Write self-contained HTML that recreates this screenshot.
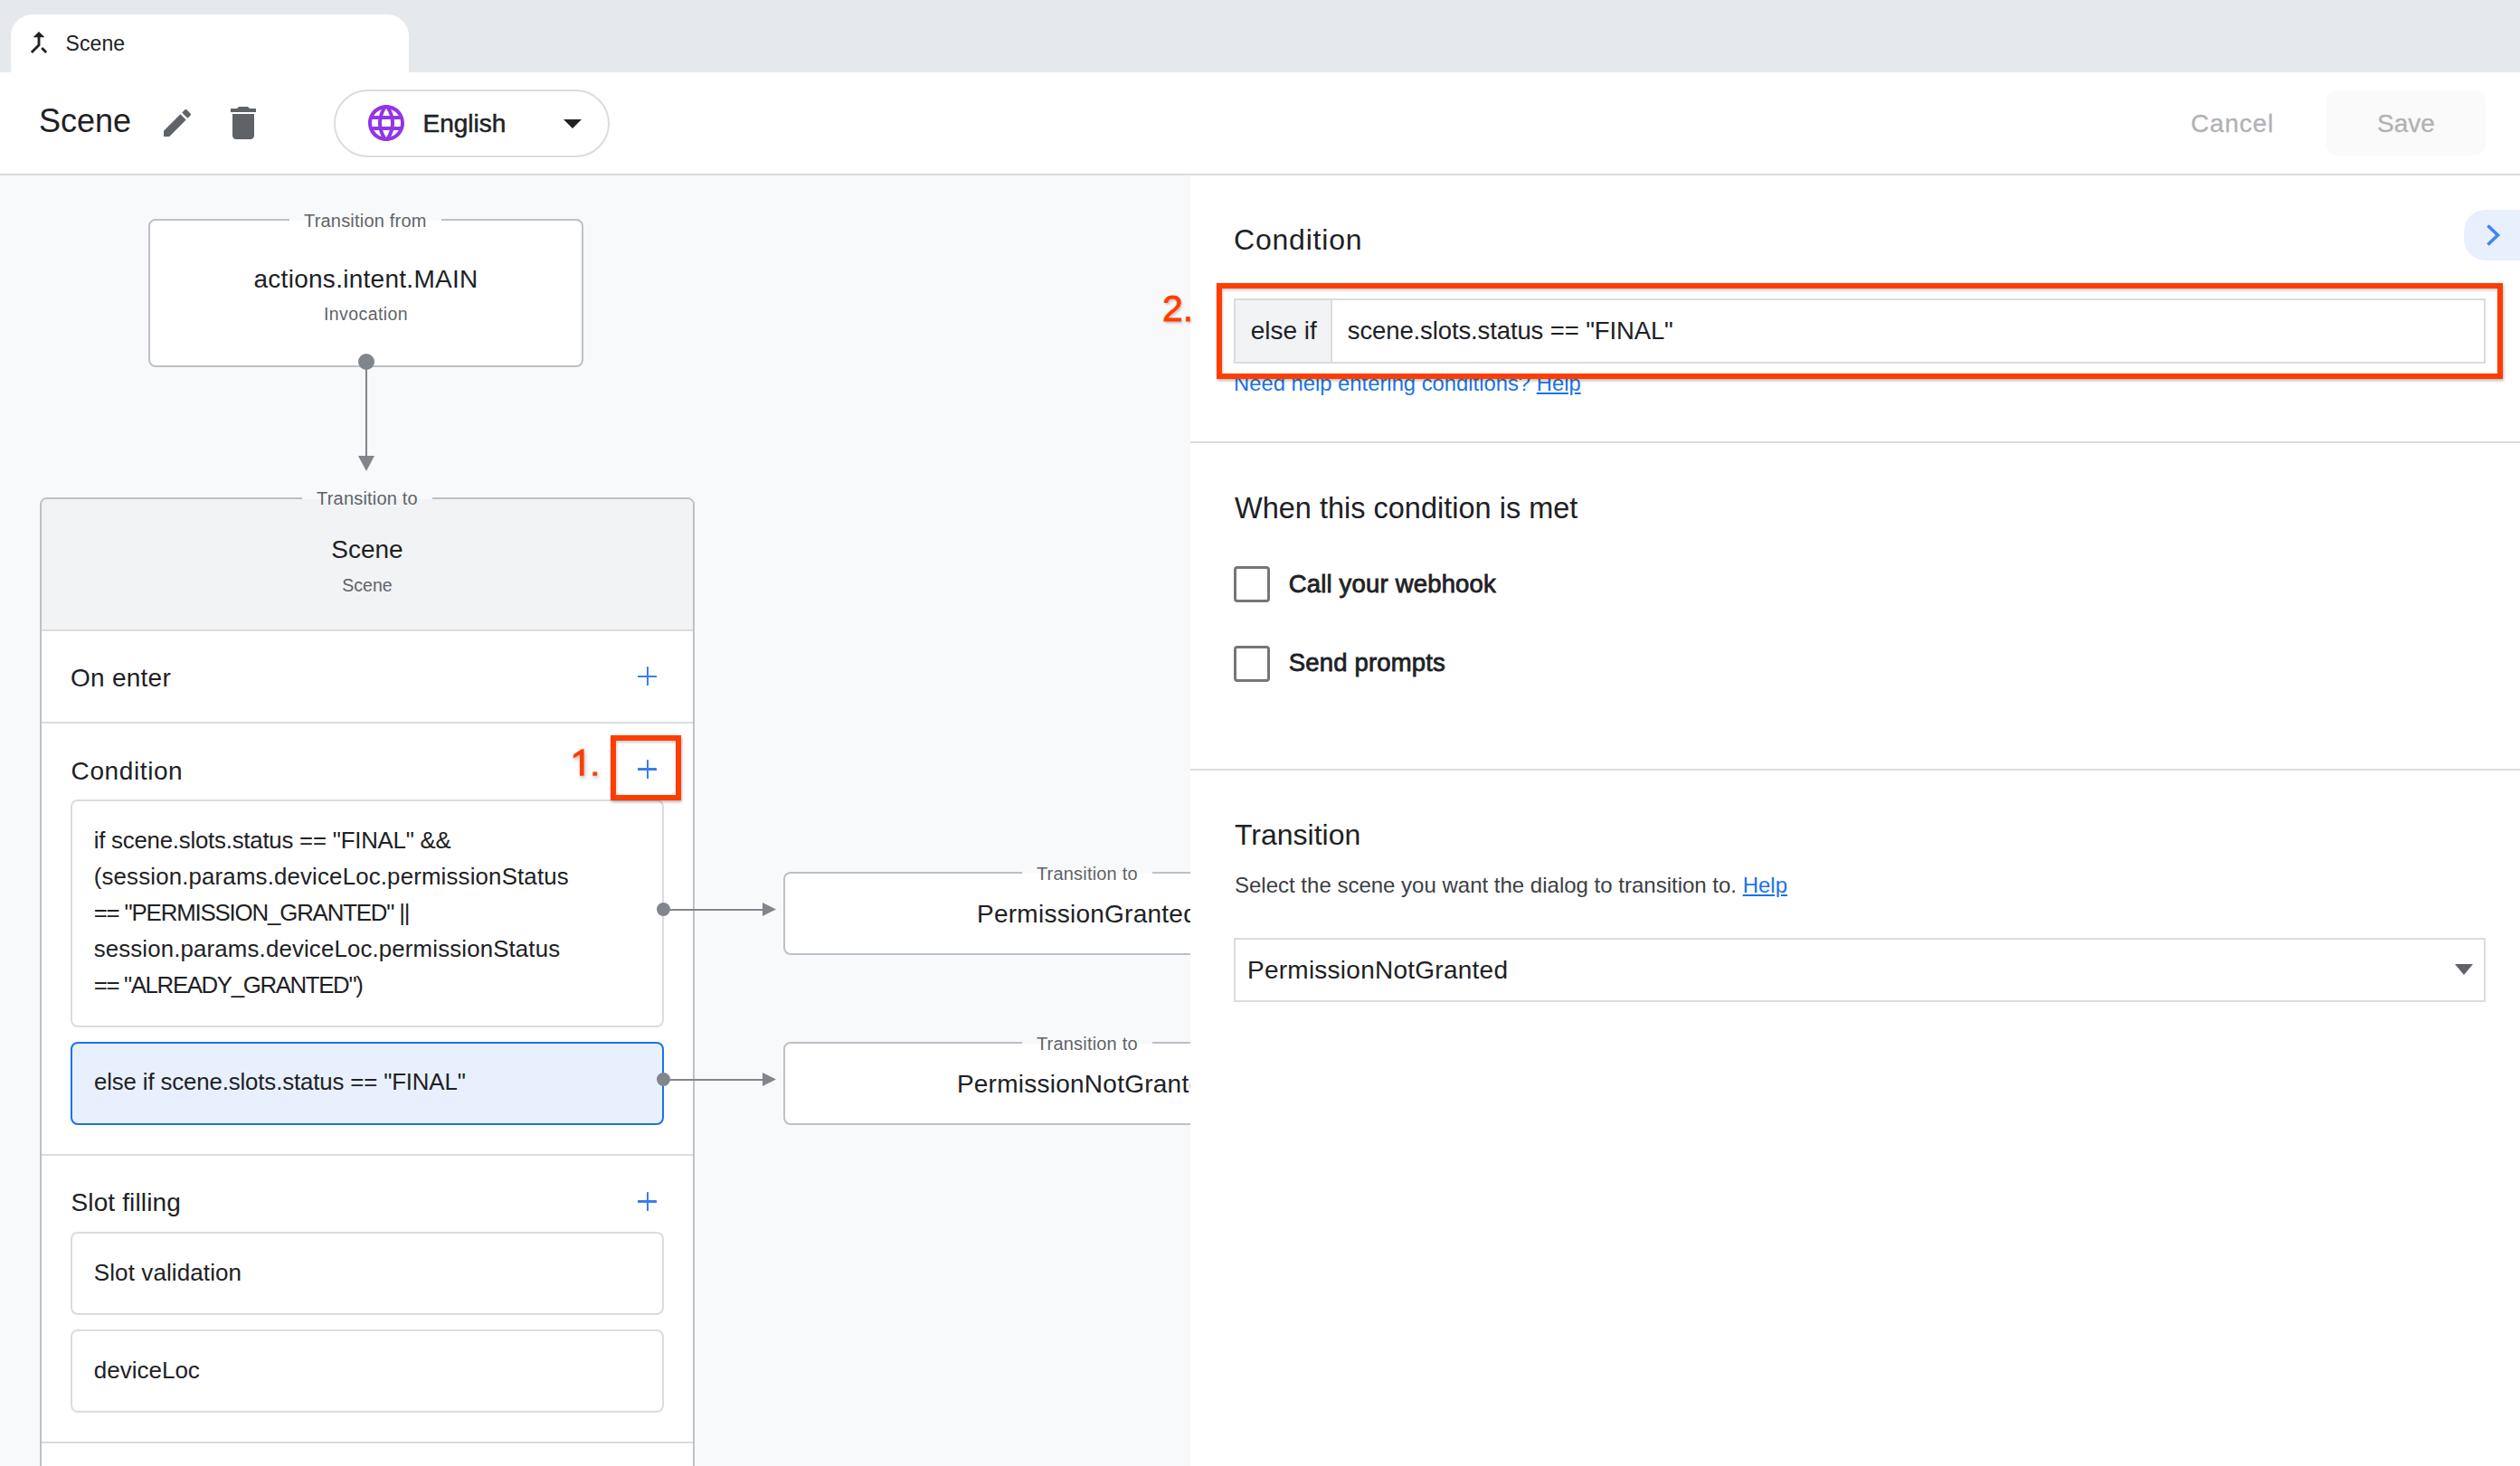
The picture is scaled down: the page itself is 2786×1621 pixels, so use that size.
<!DOCTYPE html>
<html><head><meta charset="utf-8">
<style>
*{box-sizing:border-box;margin:0;padding:0}
html,body{width:2786px;height:1621px;overflow:hidden}
body{position:relative;background:#f8f9fa;font-family:"Liberation Sans",sans-serif;color:#202124}
.a{position:absolute}
.t{position:absolute;white-space:pre;line-height:1}
.box{position:absolute;border:2px solid #bdc1c6;border-radius:8px;background:#fff}
.lbl{position:absolute;white-space:pre;font-size:20px;letter-spacing:0.2px;line-height:30px;color:#5f6368;text-align:center}
.dot{position:absolute;border-radius:50%;background:#80868b}
.hl{position:absolute;background:#80868b}
.card{position:absolute;border:2px solid #dadce0;border-radius:8px;background:#fff}
.div{position:absolute;background:#dadce0}
.plus{position:absolute;width:22px;height:22px}
.plus:before,.plus:after{content:"";position:absolute;background:#3a7ded;border-radius:0.6px}
.plus:before{left:0.4px;top:9.6px;width:21px;height:2.8px}
.plus:after{left:9.6px;top:0.4px;width:2.8px;height:21px}
.red{position:absolute;border:6px solid #ff3d00;box-shadow:1px 2px 3px rgba(0,0,0,.28),inset 1px 2px 3px rgba(0,0,0,.2)}
</style></head><body>

<!-- tab bar -->
<div class="a" style="left:0;top:0;width:2786px;height:80px;background:#e6e9ec"></div>
<div class="a" style="left:12px;top:16px;width:440px;height:64px;background:#fff;border-radius:24px 24px 0 0"></div>

<!-- header -->
<div class="a" style="left:0;top:80px;width:2786px;height:112px;background:#fff"></div>
<div class="a" style="left:0;top:192px;width:2786px;height:2px;background:#dadce0"></div>
<svg class="a" style="left:25.9px;top:30px" width="34" height="34" viewBox="0 0 24 24"><path fill="#202124" d="M17 20.41L18.41 19 15 15.59 13.59 17 17 20.41zM7.5 8H11v5.59L5.59 19 7 20.41l6-6V8h3.5L12 3.5 7.5 8z"/></svg>
<div class="t" style="left:72.5px;top:37px;font-size:23px;letter-spacing:0.1px">Scene</div>

<div class="t" style="left:43px;top:116px;font-size:36px">Scene</div>
<svg class="a" style="left:176.3px;top:116px" width="40" height="40" viewBox="0 0 24 24"><path fill="#5f6368" d="M3 17.25V21h3.75L17.81 9.94l-3.75-3.75L3 17.25zM20.71 7.04c.39-.39.39-1.02 0-1.41l-2.34-2.34c-.39-.39-1.02-.39-1.41 0l-1.830 1.83 3.75 3.75 1.83-1.83z"/></svg>
<svg class="a" style="left:244.6px;top:112px" width="48" height="48" viewBox="0 0 24 24"><path fill="#5f6368" d="M6 19c0 1.1.9 2 2 2h8c1.1 0 2-.9 2-2V7H6v12zM19 4h-3.5l-1-1h-5l-1 1H5v2h14V4z"/></svg>
<div class="a" style="left:369px;top:99px;width:305px;height:75px;border:2px solid #dadce0;border-radius:38px"></div>
<svg class="a" style="left:402.5px;top:112px" width="48" height="48" viewBox="0 0 24 24"><path fill="#9334e6" d="M11.99 2C6.47 2 2 6.48 2 12s4.47 10 9.99 10C17.52 22 22 17.52 22 12S17.52 2 11.99 2zm6.93 6h-2.95c-.32-1.25-.78-2.45-1.38-3.56 1.84.63 3.37 1.91 4.33 3.56zM12 4.04c.83 1.2 1.48 2.53 1.91 3.96h-3.82c.43-1.43 1.08-2.76 1.91-3.96zM4.26 14C4.1 13.36 4 12.69 4 12s.1-1.36.26-2h3.38c-.08.66-.14 1.32-.14 2 0 .68.06 1.34.14 2H4.26zm.82 2h2.95c.32 1.25.78 2.45 1.38 3.56-1.84-.63-3.37-1.9-4.33-3.56zm2.95-8H5.08c.96-1.66 2.49-2.93 4.33-3.56C8.81 5.55 8.35 6.75 8.03 8zM12 19.96c-.83-1.2-1.48-2.53-1.91-3.960h3.82c-.43 1.43-1.08 2.76-1.91 3.96zM14.34 14H9.66c-.09-.66-.16-1.32-.16-2 0-.68.07-1.35.16-2h4.68c.09.65.16 1.320.16 2 0 .68-.07 1.34-.16 2zm.25 5.56c.6-1.11 1.06-2.31 1.38-3.56h2.95c-.96 1.65-2.49 2.93-4.33 3.56zM16.36 14c.08-.66.14-1.32.14-2 0-.68-.06-1.34-.14-2h3.38c.16.64.26 1.31.26 2s-.1 1.36-.26 2h-3.38z"/></svg>
<div class="t" style="left:467.5px;top:123px;font-size:28px;-webkit-text-stroke:0.5px #202124">English</div>
<svg class="a" style="left:623px;top:132px" width="20" height="10" viewBox="0 0 20 10"><path fill="#202124" d="M0 0H20L10 10z"/></svg>
<div class="t" style="left:2422px;top:123px;font-size:28px;letter-spacing:0.8px;color:#b0b2b5;-webkit-text-stroke:0.3px #b0b2b5">Cancel</div>
<div class="a" style="left:2572px;top:100px;width:176px;height:72px;background:#fafafa;border-radius:12px"></div>
<div class="t" style="left:2628px;top:123px;font-size:28px;color:#b0b2b5;-webkit-text-stroke:0.3px #b0b2b5">Save</div>


<!-- canvas: transition from -->
<div class="box" style="left:164px;top:242px;width:481px;height:164px"></div>
<div class="lbl" style="left:319.6px;top:229px;width:168.4px;background:linear-gradient(#f8f9fa 14.6px,#fff 14.6px)">Transition from</div>
<div class="t" style="left:165px;width:479px;text-align:center;top:294.8px;font-size:28px;letter-spacing:0.28px">actions.intent.MAIN</div>
<div class="t" style="left:165px;width:479px;text-align:center;top:337.5px;font-size:19.5px;letter-spacing:0.4px;color:#5f6368">Invocation</div>
<div class="dot" style="left:396px;top:391px;width:18px;height:18px"></div>
<div class="hl" style="left:404px;top:400px;width:2px;height:106px"></div>
<svg class="a" style="left:396px;top:504px" width="18" height="17" viewBox="0 0 18 17"><path fill="#80868b" d="M0 0H18L9 17z"/></svg>

<!-- scene box -->
<div class="a" style="left:44px;top:550px;width:724px;height:1100px;border:2px solid #bdc1c6;border-radius:8px;background:#fff;overflow:hidden">
  <div class="a" style="left:0;top:0;width:720px;height:144px;background:#f1f3f4"></div>
  <div class="a" style="left:0;top:144px;width:720px;height:2px;background:#dadce0"></div>
</div>
<div class="lbl" style="left:334px;top:536px;width:144px;background:linear-gradient(#f8f9fa 16px,#f1f3f4 16px)">Transition to</div>
<div class="t" style="left:45px;width:722px;text-align:center;top:594px;font-size:28px">Scene</div>
<div class="t" style="left:45px;width:722px;text-align:center;top:638px;font-size:19.5px;color:#5f6368">Scene</div>

<div class="t" style="left:78px;top:736px;font-size:28px;letter-spacing:0.25px">On enter</div>
<div class="plus" style="left:705px;top:737px"></div>
<div class="div" style="left:46px;top:798px;width:720px;height:2px"></div>

<div class="t" style="left:78.6px;top:839px;font-size:28px;letter-spacing:0.6px">Condition</div>
<div class="plus" style="left:705px;top:839.5px"></div>
<div class="card" style="left:78px;top:884px;width:656px;height:252px"></div>
<div class="a" style="left:103.7px;top:910px;font-size:25.8px;line-height:39.9px;white-space:pre"><span id="l1" style="letter-spacing:-0.22px">if scene.slots.status == "FINAL" &amp;&amp;</span>
<span id="l2" style="letter-spacing:0.18px">(session.params.deviceLoc.permissionStatus</span>
<span id="l3" style="letter-spacing:-1.15px">== "PERMISSION_GRANTED" ||</span>
<span id="l4" style="letter-spacing:0.16px">session.params.deviceLoc.permissionStatus</span>
<span id="l5" style="letter-spacing:-1.35px">== "ALREADY_GRANTED")</span></div>
<div class="card" style="left:78px;top:1152px;width:656px;height:92px;border-color:#1a73e8;background:#e8f0fe"></div>
<div class="t" style="left:104px;top:1184px;font-size:25.8px;letter-spacing:-0.13px">else if scene.slots.status == "FINAL"</div>
<div class="div" style="left:46px;top:1276px;width:720px;height:2px"></div>

<div class="t" style="left:78.5px;top:1316px;font-size:28px;letter-spacing:0.13px">Slot filling</div>
<div class="plus" style="left:705px;top:1317.5px"></div>
<div class="card" style="left:78px;top:1362px;width:656px;height:92px"></div>
<div class="t" style="left:103.8px;top:1394px;font-size:26px;letter-spacing:0.1px">Slot validation</div>
<div class="card" style="left:78px;top:1470px;width:656px;height:92px"></div>
<div class="t" style="left:103.8px;top:1502px;font-size:26px">deviceLoc</div>
<div class="div" style="left:46px;top:1594px;width:720px;height:2px"></div>

<!-- connectors -->
<div class="dot" style="left:726px;top:998px;width:15px;height:15px"></div>
<div class="hl" style="left:733px;top:1004.5px;width:112px;height:2px"></div>
<svg class="a" style="left:843px;top:998px" width="15" height="15" viewBox="0 0 15 15"><path fill="#80868b" d="M0 0L15 7.5L0 15z"/></svg>
<div class="dot" style="left:726px;top:1186px;width:15px;height:15px"></div>
<div class="hl" style="left:733px;top:1192.5px;width:112px;height:2px"></div>
<svg class="a" style="left:843px;top:1186px" width="15" height="15" viewBox="0 0 15 15"><path fill="#80868b" d="M0 0L15 7.5L0 15z"/></svg>

<!-- transition to boxes -->
<div class="box" style="left:866px;top:964px;width:672px;height:92px"></div>
<div class="lbl" style="left:1129.7px;top:951px;width:144.3px;background:linear-gradient(#f8f9fa 15px,#fff 15px)">Transition to</div>
<div class="t" style="left:867px;width:670px;text-align:center;top:997px;font-size:28px;letter-spacing:0.25px">PermissionGranted</div>
<div class="box" style="left:866px;top:1152px;width:672px;height:92px"></div>
<div class="lbl" style="left:1129.7px;top:1139px;width:144.3px;background:linear-gradient(#f8f9fa 15px,#fff 15px)">Transition to</div>
<div class="t" style="left:867px;width:670px;text-align:center;top:1185px;font-size:28px;letter-spacing:0.25px">PermissionNotGranted</div>

<div class="red" style="left:674.5px;top:813px;width:78.5px;height:72px;border-width:6.5px"></div>
<svg class="a" style="left:630px;top:825px;filter:drop-shadow(1px 2px 2px rgba(0,0,0,.3))" width="35" height="36" viewBox="630 825 35 36"><path fill="#ff3d00" d="M643.2 828.3H645.6V857.8H641V834.4L634 838.6V834.3zM655.4 853.4H660.2V857.8H655.4z"/></svg>

<!-- right panel -->
<div class="a" style="left:1316px;top:194px;width:1470px;height:1427px;background:#fff"></div>
<div class="t" style="left:1364px;top:249px;font-size:32px;letter-spacing:0.8px">Condition</div>
<div class="a" style="left:2724px;top:232px;width:80px;height:56px;background:#e8f0fe;border-radius:24px 0 0 24px"></div>
<svg class="a" style="left:2740px;top:244px" width="28" height="28" viewBox="0 0 28 28"><path fill="none" stroke="#4285f4" stroke-width="3.6" d="M10.5 5.5L21.5 16L10.5 26.5"/></svg>

<div class="a" style="left:1364px;top:330px;width:1384px;height:72px;border:2px solid #dadce0;background:#fff"></div>
<div class="a" style="left:1366px;top:332px;width:107px;height:68px;background:#f1f3f4;border-right:2px solid #dadce0"></div>
<div class="t" style="left:1382.7px;top:352px;font-size:28px">else if</div>
<div class="t" style="left:1489.8px;top:352px;font-size:27.5px;letter-spacing:-0.12px">scene.slots.status == "FINAL"</div>
<div class="t" style="left:1364px;top:412px;font-size:23.8px;color:#1a73e8">Need help entering conditions? <span style="text-decoration:underline">Help</span></div>
<div class="red" style="left:1345px;top:313.3px;width:1421.6px;height:105.7px"></div>
<div class="t" style="left:1285px;top:321px;font-size:41px;color:#ff3d00;-webkit-text-stroke:0.9px #ff3d00;text-shadow:0 0 2px #fff,1px 2px 3px rgba(0,0,0,.3)">2.</div>
<div class="div" style="left:1316px;top:488px;width:1470px;height:2px"></div>

<div class="t" style="left:1365px;top:546px;font-size:32.5px">When this condition is met</div>
<div class="a" style="left:1364px;top:626px;width:40px;height:40px;border:3.5px solid #767676;border-radius:4px"></div>
<div class="t" style="left:1424.7px;top:632px;font-size:27.5px;-webkit-text-stroke:0.8px #202124;letter-spacing:0.18px">Call your webhook</div>
<div class="a" style="left:1364px;top:714px;width:40px;height:40px;border:3.5px solid #767676;border-radius:4px"></div>
<div class="t" style="left:1424.7px;top:719px;font-size:27.5px;-webkit-text-stroke:0.8px #202124;letter-spacing:0.18px">Send prompts</div>
<div class="div" style="left:1316px;top:849.5px;width:1470px;height:2px"></div>

<div class="t" style="left:1365px;top:907px;font-size:32px">Transition</div>
<div class="t" style="left:1365px;top:967px;font-size:24px;color:#3c4043">Select the scene you want the dialog to transition to. <span style="color:#1a73e8;text-decoration:underline">Help</span></div>
<div class="a" style="left:1364px;top:1037px;width:1384px;height:71px;border:2px solid #dadce0;background:#fff"></div>
<div class="t" style="left:1379px;top:1058.5px;font-size:28px;letter-spacing:0.25px">PermissionNotGranted</div>
<svg class="a" style="left:2714px;top:1066px" width="20" height="12" viewBox="0 0 20 12"><path fill="#5f6368" d="M0 0H20L10 12z"/></svg>

</body></html>
